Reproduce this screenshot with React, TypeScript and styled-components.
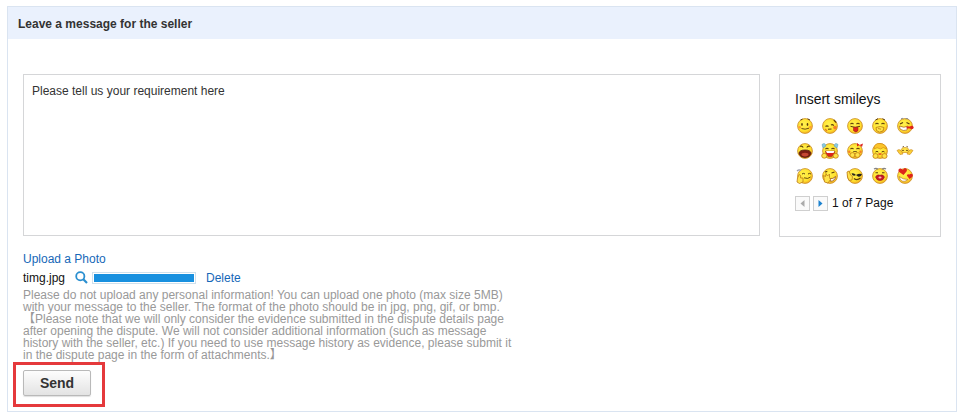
import React from "react";
import styled, { createGlobalStyle } from "styled-components";

const GlobalStyle = createGlobalStyle`
  * { box-sizing: border-box; }
  body {
    margin: 0;
    background: #fff;
    color: #333;
    font-family: "Liberation Sans", Arial, "Noto Sans CJK SC", sans-serif;
    font-size: 12px;
    line-height: 16px;
  }
`;

const Page = styled.main`
  padding: 6px 7px 5px;
`;

const Panel = styled.section`
  border: 1px solid #dae4f1;
`;

const PanelTitle = styled.h1`
  margin: 0;
  padding: 9px 10px 7px;
  background: #eaf1fd;
  font-size: 12px;
  line-height: 16px;
  font-weight: bold;
`;

const Form = styled.form`
  padding: 35px 15px 4px;
`;

const Compose = styled.div`
  display: grid;
  grid-template-columns: minmax(0, 1fr) 162px;
  column-gap: 19px;
  align-items: start;
`;

const MessageBox = styled.textarea`
  display: block;
  width: 100%;
  height: 162px;
  margin: 0;
  padding: 8px;
  border: 1px solid #d5d6d8;
  outline: none;
  resize: none;
  color: #333;
  background: #fff;
  font: inherit;
`;

const SmileyPanel = styled.aside`
  height: 163px;
  padding: 16px 15px;
  border: 1px solid #d5d6d8;
  color: #111;
`;

const SmileyTitle = styled.h2`
  margin: 0 0 9px;
  font-size: 14px;
  line-height: 16px;
  font-weight: normal;
`;

const SmileyGrid = styled.div`
  display: grid;
  grid-template-columns: repeat(5, 20px);
  gap: 5px;
`;

const SmileyButton = styled.button`
  width: 20px;
  height: 20px;
  padding: 1px;
  border: 0;
  background: none;
  cursor: pointer;

  svg { display: block; }
`;

const Pager = styled.nav`
  display: flex;
  align-items: center;
  gap: 3px;
  margin-top: 9px;
`;

const PagerButton = styled.button`
  display: flex;
  align-items: center;
  justify-content: center;
  width: 15px;
  height: 15px;
  padding: 0;
  border: 1px solid #cfcfcf;
  background: #fafafa;
  color: #1c82cf;

  &:disabled { color: #aaa; }
`;

const PageCount = styled.span`
  margin-left: 1px;
`;

const Link = styled.a`
  color: #1668b8;
  text-decoration: none;
`;

const UploadRow = styled.div`
  margin-top: 14px;
`;

const FileRow = styled.div`
  display: flex;
  align-items: center;
  height: 21px;
`;

const FileName = styled.span`
  margin-right: 10px;
  color: #111;
`;

const PreviewButton = styled.button`
  width: 13px;
  height: 13px;
  margin-right: 4px;
  padding: 0;
  border: 0;
  background: none;

  svg { display: block; }
`;

const ProgressTrack = styled.div`
  width: 104px;
  height: 12px;
  margin-right: 10px;
  padding: 1px;
  border: 1px solid #cfe0ec;
`;

const ProgressFill = styled.div`
  height: 100%;
  background: #1890df;
`;

const Hint = styled.p`
  margin: 1px 0;
  color: #999;
  line-height: 12px;
`;

const Highlight = styled.div`
  width: fit-content;
  margin-left: -10px;
  padding: 5px 11px 8px 7px;
  border: 3px solid #e5393c;
`;

const SendButton = styled.button`
  display: block;
  width: 68px;
  height: 26px;
  padding: 0;
  border: 1px solid #b9b9b9;
  border-radius: 2px;
  background: linear-gradient(#fdfdfd, #e3e3e3);
  box-shadow: 0 1px 1px #e0e0e0;
  color: #333;
  font: bold 14px "Liberation Sans", Arial, sans-serif;
`;

const INK = "#5c3d0c";
const RED = "#de241b";
const EDGE = "#cf9430";

type Smiley = { name: string; art: React.ReactNode; bare?: boolean };

const happyEyes = (
  <path d="M4.5 7.2 Q6 5.2 7.5 7.2 M10.5 7.2 Q12 5.2 13.5 7.2" fill="none" stroke={INK} strokeWidth="1.1" />
);
const hand = (x: number, y: number) => (
  <ellipse cx={x} cy={y} rx="2.6" ry="2.4" fill="#ffe34a" stroke="#c07a12" strokeWidth=".8" />
);

const smileys: Smiley[] = [
  {
    name: "Smile",
    art: (
      <>
        <path d="M4.5 3 L6.5 2.2 M11.5 1.8 L14 3" stroke={INK} strokeWidth="1" />
        <ellipse cx="6" cy="7.5" rx=".8" ry="1.4" fill={INK} />
        <ellipse cx="11.5" cy="7.5" rx=".8" ry="1.4" fill={INK} />
        <path d="M5.5 11.5 Q9 13 13 11.2" stroke={INK} strokeWidth=".9" fill="none" />
        <circle cx="3.6" cy="10.2" r="1.3" fill="#ff9d35" />
        <circle cx="14.4" cy="10.2" r="1.3" fill="#ff9d35" />
      </>
    ),
  },
  {
    name: "Shy",
    art: (
      <>
        <path d="M4.5 9.5 Q6 8.2 7.5 9.5 M10 8 Q11.5 7 12.8 8.6 M12.8 3 L15.2 5.5" stroke={INK} strokeWidth="1.1" fill="none" />
        <circle cx="14" cy="10.5" r="1.8" fill="#f58126" />
        <path d="M7 12.3 L10.5 12" stroke={INK} strokeWidth="1.1" />
        <path d="M4 12 L6 14" stroke="#e68022" strokeWidth="1.5" />
      </>
    ),
  },
  {
    name: "Tongue",
    art: (
      <>
        {happyEyes}
        <path d="M4.5 9.3 Q9 11.5 14 9.3" stroke={INK} fill="none" />
        <path d="M7.5 10.3 H12 V13.5 Q10 16.5 7.5 13.5 Z" fill={RED} stroke="#a52318" strokeWidth=".6" />
      </>
    ),
  },
  {
    name: "Giggle",
    art: (
      <>
        <path d="M4.5 3 L7 1.7 M11.5 1.7 L14 3" stroke={INK} />
        {happyEyes}
        <path d="M5 10.5 Q9.5 8.5 13 10.5 L12 14 Q8 16.5 5.5 13.5 Z" fill="#ffe34a" stroke="#b7790f" strokeWidth=".8" />
        <path d="M7 11.5 L10 12.2" stroke="#b7790f" strokeWidth=".8" />
      </>
    ),
  },
  {
    name: "Thermometer",
    art: (
      <>
        <path d="M5 2 Q6 .5 7.5 2 M9.5 2 Q11 .5 12.5 2.4" stroke="#8b8b91" fill="none" />
        <path d="M4 7 L7 5.5 M10.5 5.5 L13.5 7" stroke={INK} strokeWidth="1.3" />
        <path d="M3.5 9 Q8 11.5 12 9 L11 13 Q7 14.5 4 12 Z" fill="#fff" stroke="#a75c17" strokeWidth=".7" />
        <path d="M10.5 10.5 H16.5" stroke={RED} strokeWidth="2" />
        <circle cx="15.8" cy="10.5" r="1.8" fill={RED} />
      </>
    ),
  },
  {
    name: "Yell",
    art: (
      <>
        <path d="M4.2 4.5 Q6 3.5 7.2 5.5 M13.8 4.5 Q12 3.5 10.8 5.5" stroke={INK} strokeWidth="1.1" fill="none" />
        <path d="M3 11.5 Q3 8 9 8 Q15 8 15 11.5 Q14 15.5 9 15.5 Q4 15.5 3 11.5 Z" fill="#7b1d12" stroke="#542011" strokeWidth=".8" />
        <ellipse cx="9" cy="12.6" rx="3.5" ry="1.8" fill="#c64832" />
      </>
    ),
  },
  {
    name: "Laughing tears",
    art: (
      <>
        <path d="M1 2.5 Q4 0 5 4 L2 6 Z M17 2.5 Q14 0 13 4 L16 6 Z" fill="#8cc9df" stroke="#559ab5" strokeWidth=".5" />
        {happyEyes}
        <path d="M4.5 9 H14 Q13 14.8 9 14.8 Q5 14.8 4.5 9 Z" fill={RED} stroke="#8a3b18" strokeWidth=".6" />
        <path d="M5 9 H13.5 L12.5 11 H6 Z" fill="#fff" />
        {hand(3.3, 13.8)}
        {hand(14.7, 13.8)}
      </>
    ),
  },
  {
    name: "Bashful",
    art: (
      <>
        <path d="M13.5 3 L11 1 V4.5 Z M13.5 3 L17 1.5 L16 5 Z" fill={RED} />
        {happyEyes}
        <circle cx="3.3" cy="9.7" r="1.2" fill="#f58126" />
        <circle cx="14.5" cy="9.7" r="1.2" fill="#f58126" />
        <path d="M7 9.8 Q9 9 11 9.8" stroke={INK} strokeWidth=".8" fill="none" />
        {hand(6.5, 13)}
        {hand(11.5, 13)}
      </>
    ),
  },
  {
    name: "Praying",
    art: (
      <>
        <path d="M3 7 Q3 1 9 1.5 Q15 2 15.5 7 Q12 4 9.5 7 Q6 4.5 3 7 Z" fill="#fcc52a" stroke="#d18b15" strokeWidth=".7" />
        <path d="M4.5 10 Q6 8.7 7.3 10 M10.7 10 Q12.2 8.7 13.5 10" stroke={INK} strokeWidth="1" fill="none" />
        <path d="M7.5 12 H10.5" stroke={RED} strokeWidth="1.2" />
        {hand(4.5, 14)}
        {hand(13.5, 14)}
      </>
    ),
  },
  {
    name: "Peek",
    bare: true,
    art: (
      <>
        <path d="M4.5 10.5 Q4.5 5.5 9 5.5 Q13.5 5.5 13.5 10.5 Z" fill="#ffe34a" stroke="#dba128" strokeWidth=".8" />
        <path d="M6.5 5 L8 4.4 M10.5 4.4 L12 5" stroke={INK} strokeWidth=".8" />
        <path d="M6.2 8.4 H7.8 M10.2 8.4 H11.8" stroke={INK} />
        <path d="M1 8.5 L3 7.5 L5.5 9 L7 12 L4 12.5 Z M17 8.5 L15 7.5 L12.5 9 L11 12 L14 12.5 Z" fill="#fbcf35" stroke="#c9851a" strokeWidth=".6" />
      </>
    ),
  },
  {
    name: "Thumbs up",
    art: (
      <>
        <path d="M1 4 Q3 2 5 3.5" stroke="#9a9cab" strokeWidth="1.3" fill="none" />
        <path d="M6 7 Q7.5 5.8 9 7 M12 7 Q13.5 5.8 15 7" stroke={INK} strokeWidth="1" fill="none" />
        <path d="M8 10.8 Q12 12.5 14.5 10" stroke={INK} strokeWidth=".9" fill="none" />
        <path d="M1.5 11 L3.2 7.5 L4.6 8.5 V11 H7 V15 L3.5 16.5 L1 15 Z" fill="#ffe34a" stroke="#bd7b15" strokeWidth=".8" />
      </>
    ),
  },
  {
    name: "Facepalm",
    art: (
      <>
        <path d="M10.5 6 L13.5 5 M4 5 L6.3 4.4" stroke={INK} strokeWidth="1.1" />
        <path d="M9 11.5 Q12 12.3 14.5 9.5 Q14 14 9.5 14.3 Z" fill="#fff" stroke="#965321" strokeWidth=".8" />
        <path d="M2.5 8.5 L4.5 9.5 L5 6.5 L6.5 9 L8.5 7 L8.5 10.5 L9.5 12.5 L7 16 L3.5 15 Z" fill="#ffe34a" stroke="#bd7b15" strokeWidth=".8" />
      </>
    ),
  },
  {
    name: "Cool salute",
    art: (
      <>
        <path d="M5.5 6.5 Q8 5.5 10 8 Q13 6 16 7 Q15 10.5 12 9.5 L10 8 Q7 10 5.5 6.5 Z" fill="#28251d" />
        <path d="M8 11.5 Q11 13.8 14.5 11" stroke={INK} strokeWidth="1.2" fill="none" />
        <path d="M1 5 L3 4 L4.5 8 L6.5 9.5 L6 13 L3 13.5 L1.5 10 Z" fill="#ffe34a" stroke="#bd7b15" strokeWidth=".8" />
      </>
    ),
  },
  {
    name: "Kiss",
    art: (
      <>
        <path d="M3 2 Q5 .5 7 2.2 M11 2.2 Q13 .5 15 2" stroke="#858585" fill="none" strokeWidth="1.2" />
        <path d="M4.5 5.8 H7 M11 5.8 H13.5" stroke={INK} strokeWidth="1.1" />
        <path d="M4.5 10 Q6 7 9 8.2 Q12 7 13.5 10 Q12 14 9 13.5 Q6 14 4.5 10 Z" fill="#c91624" stroke="#8e2021" strokeWidth=".6" />
        <ellipse cx="9" cy="10.6" rx="1.6" ry="1" fill="#fbb7b5" />
      </>
    ),
  },
  {
    name: "In love",
    art: (
      <>
        <path d="M7.5 8 L2.5 4.5 Q2 1 5 1.5 L6.8 2.8 L8.8 1 Q12 1.5 10.5 4.5 Z" fill={RED} />
        <path d="M13.5 12 L10.8 8.5 Q11.5 6.5 13.3 7.5 Q15.5 5.8 17 8 Q17 10 13.5 12 Z" fill={RED} />
        <path d="M3 9.5 Q7 12.5 12 12.5 Q8 16 4.5 13 Z" fill="#fff" stroke="#b97830" strokeWidth=".7" />
      </>
    ),
  },
];

function FaceGradient() {
  return (
    <radialGradient id="face" cx="42%" cy="38%" r="65%">
      <stop offset="0" stopColor="#fff250" />
      <stop offset=".7" stopColor="#ffe02c" />
      <stop offset="1" stopColor="#f5ad20" />
    </radialGradient>
  );
}

function SmileyFace({ art, bare, withGradient }: Smiley & { withGradient: boolean }) {
  return (
    <svg width="18" height="18" viewBox="0 0 18 18" aria-hidden="true">
      {withGradient && <defs><FaceGradient /></defs>}
      {!bare && <circle cx="9" cy="9" r="7.4" fill="url(#face)" stroke={EDGE} strokeWidth=".9" />}
      {art}
    </svg>
  );
}

export default function App() {
  return (
    <Page>
      <GlobalStyle />
      <Panel>
        <PanelTitle id="message-title">Leave a message for the seller</PanelTitle>
        <Form onSubmit={(event) => event.preventDefault()}>
          <Compose>
            <MessageBox aria-labelledby="message-title" defaultValue="Please tell us your requirement here" />
            <SmileyPanel>
              <SmileyTitle>Insert smileys</SmileyTitle>
              <SmileyGrid>
                {smileys.map((smiley, index) => (
                  <SmileyButton key={smiley.name} type="button" aria-label={smiley.name}>
                    <SmileyFace {...smiley} withGradient={index === 0} />
                  </SmileyButton>
                ))}
              </SmileyGrid>
              <Pager aria-label="Smiley pages">
                <PagerButton type="button" disabled aria-label="Previous page">
                  <svg width="5" height="7" viewBox="0 0 5 7"><path d="M4.5 0 V7 L.5 3.5 Z" fill="currentColor" /></svg>
                </PagerButton>
                <PagerButton type="button" aria-label="Next page">
                  <svg width="5" height="7" viewBox="0 0 5 7"><path d="M.5 0 V7 L4.5 3.5 Z" fill="currentColor" /></svg>
                </PagerButton>
                <PageCount>1 of 7 Page</PageCount>
              </Pager>
            </SmileyPanel>
          </Compose>
          <UploadRow>
            <Link href="#upload">Upload a Photo</Link>
          </UploadRow>
          <FileRow>
            <FileName>timg.jpg</FileName>
            <PreviewButton type="button" aria-label="Preview timg.jpg">
              <svg width="13" height="13" viewBox="0 0 13 13">
                <circle cx="5.3" cy="5.3" r="4.1" fill="none" stroke="#2a8fd0" strokeWidth="1.8" />
                <path d="M8.3 8.3 L12 12" stroke="#2a8fd0" strokeWidth="2.2" />
              </svg>
            </PreviewButton>
            <ProgressTrack role="progressbar" aria-label="Upload progress" aria-valuenow={100}>
              <ProgressFill />
            </ProgressTrack>
            <Link href="#delete">Delete</Link>
          </FileRow>
          <Hint>
            Please do not upload any personal information! You can upload one photo (max size 5MB)<br />
            with your message to the seller. The format of the photo should be in jpg, png, gif, or bmp.<br />
            【Please note that we will only consider the evidence submitted in the dispute details page<br />
            after opening the dispute. We will not consider additional information (such as message<br />
            history with the seller, etc.) If you need to use message history as evidence, please submit it<br />
            in the dispute page in the form of attachments.】
          </Hint>
          <Highlight>
            <SendButton type="submit">Send</SendButton>
          </Highlight>
        </Form>
      </Panel>
    </Page>
  );
}
